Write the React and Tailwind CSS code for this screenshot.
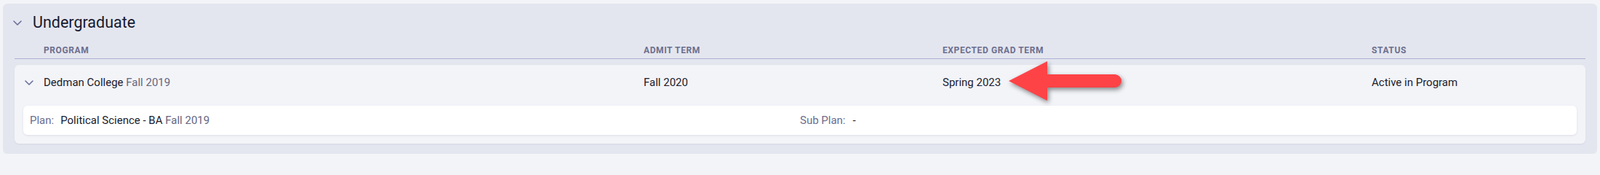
import React from "react";

const columns = ["Program", "Admit Term", "Expected Grad Term", "Status"];

function Chevron({ className }) {
  return (
    <svg viewBox="0 0 12 7" className={className} fill="none">
      <path
        d="M1 1l5 5 5-5"
        stroke="currentColor"
        strokeWidth="1.6"
        strokeLinecap="round"
        strokeLinejoin="round"
      />
    </svg>
  );
}

function Arrow() {
  return (
    <svg
      viewBox="0 0 172 66"
      className="absolute left-[1360px] top-[-23px] h-[66px] w-[172px] drop-shadow-[2px_3px_3px_rgba(0,0,0,0.45)]"
    >
      <path
        d="M7 31 L60 4 L60 22 L153 22 A9 9 0 0 1 153 40 L60 40 L60 58 Z"
        fill="#fd4346"
      />
    </svg>
  );
}

export default function App() {
  return (
    <div className="min-h-screen overflow-hidden bg-[#f3f4f8] pt-[5px] font-['Roboto',sans-serif] text-[#1a1b2c]">
      <div className="mx-1 rounded-md bg-[#e4e6ef] pt-3 pb-[14px]">
        {/* section title */}
        <div className="flex h-7 items-center pl-[14px]">
          <Chevron className="h-[7px] w-[12px] text-[#6c6f9b]" />
          <h2 className="ml-[15px] text-[21.5px] leading-7 text-[#161a30]">
            Undergraduate
          </h2>
        </div>

        <div className="px-4">
          {/* column headers */}
          <div className="mt-4 grid grid-cols-[40px_825px_411px_590px_1fr] border-b border-[#aeb1d3] pb-[3px]">
            <div />
            {columns.map((col) => (
              <div
                key={col}
                className="text-[12px] font-bold uppercase leading-4 tracking-[0.05em] text-[#6c6f8e]"
              >
                {col}
              </div>
            ))}
          </div>

          {/* program row */}
          <div className="mt-2 rounded-md bg-[#f3f4f8] px-3 pt-[14px] pb-3 shadow-[0_1px_2px_rgba(40,44,90,0.08)]">
            <div className="relative -mx-3 grid grid-cols-[40px_825px_411px_590px_1fr] text-[15px] leading-5">
              <div className="flex items-center pl-[14px]">
                <Chevron className="h-[7px] w-[12px] text-[#6c6f9b]" />
              </div>
              <div>
                Dedman College <span className="text-[#64667f]">Fall 2019</span>
              </div>
              <div>Fall 2020</div>
              <div>Spring 2023</div>
              <div>Active in Program</div>
              <Arrow />
            </div>

            <div className="mt-[22px] grid grid-cols-[1059px_1fr] rounded-md bg-white py-[10px] pl-[9px] text-[15px] leading-5 shadow-[0_1px_3px_rgba(40,44,90,0.1)]">
              <div>
                <span className="text-[#6b6e8f]">Plan:</span>
                <span className="ml-[9px]">Political Science - BA</span>{" "}
                <span className="text-[#64667f]">Fall 2019</span>
              </div>
              <div>
                <span className="text-[#6b6e8f]">Sub Plan:</span>
                <span className="ml-[10px]">-</span>
              </div>
            </div>
          </div>
        </div>
      </div>
    </div>
  );
}
